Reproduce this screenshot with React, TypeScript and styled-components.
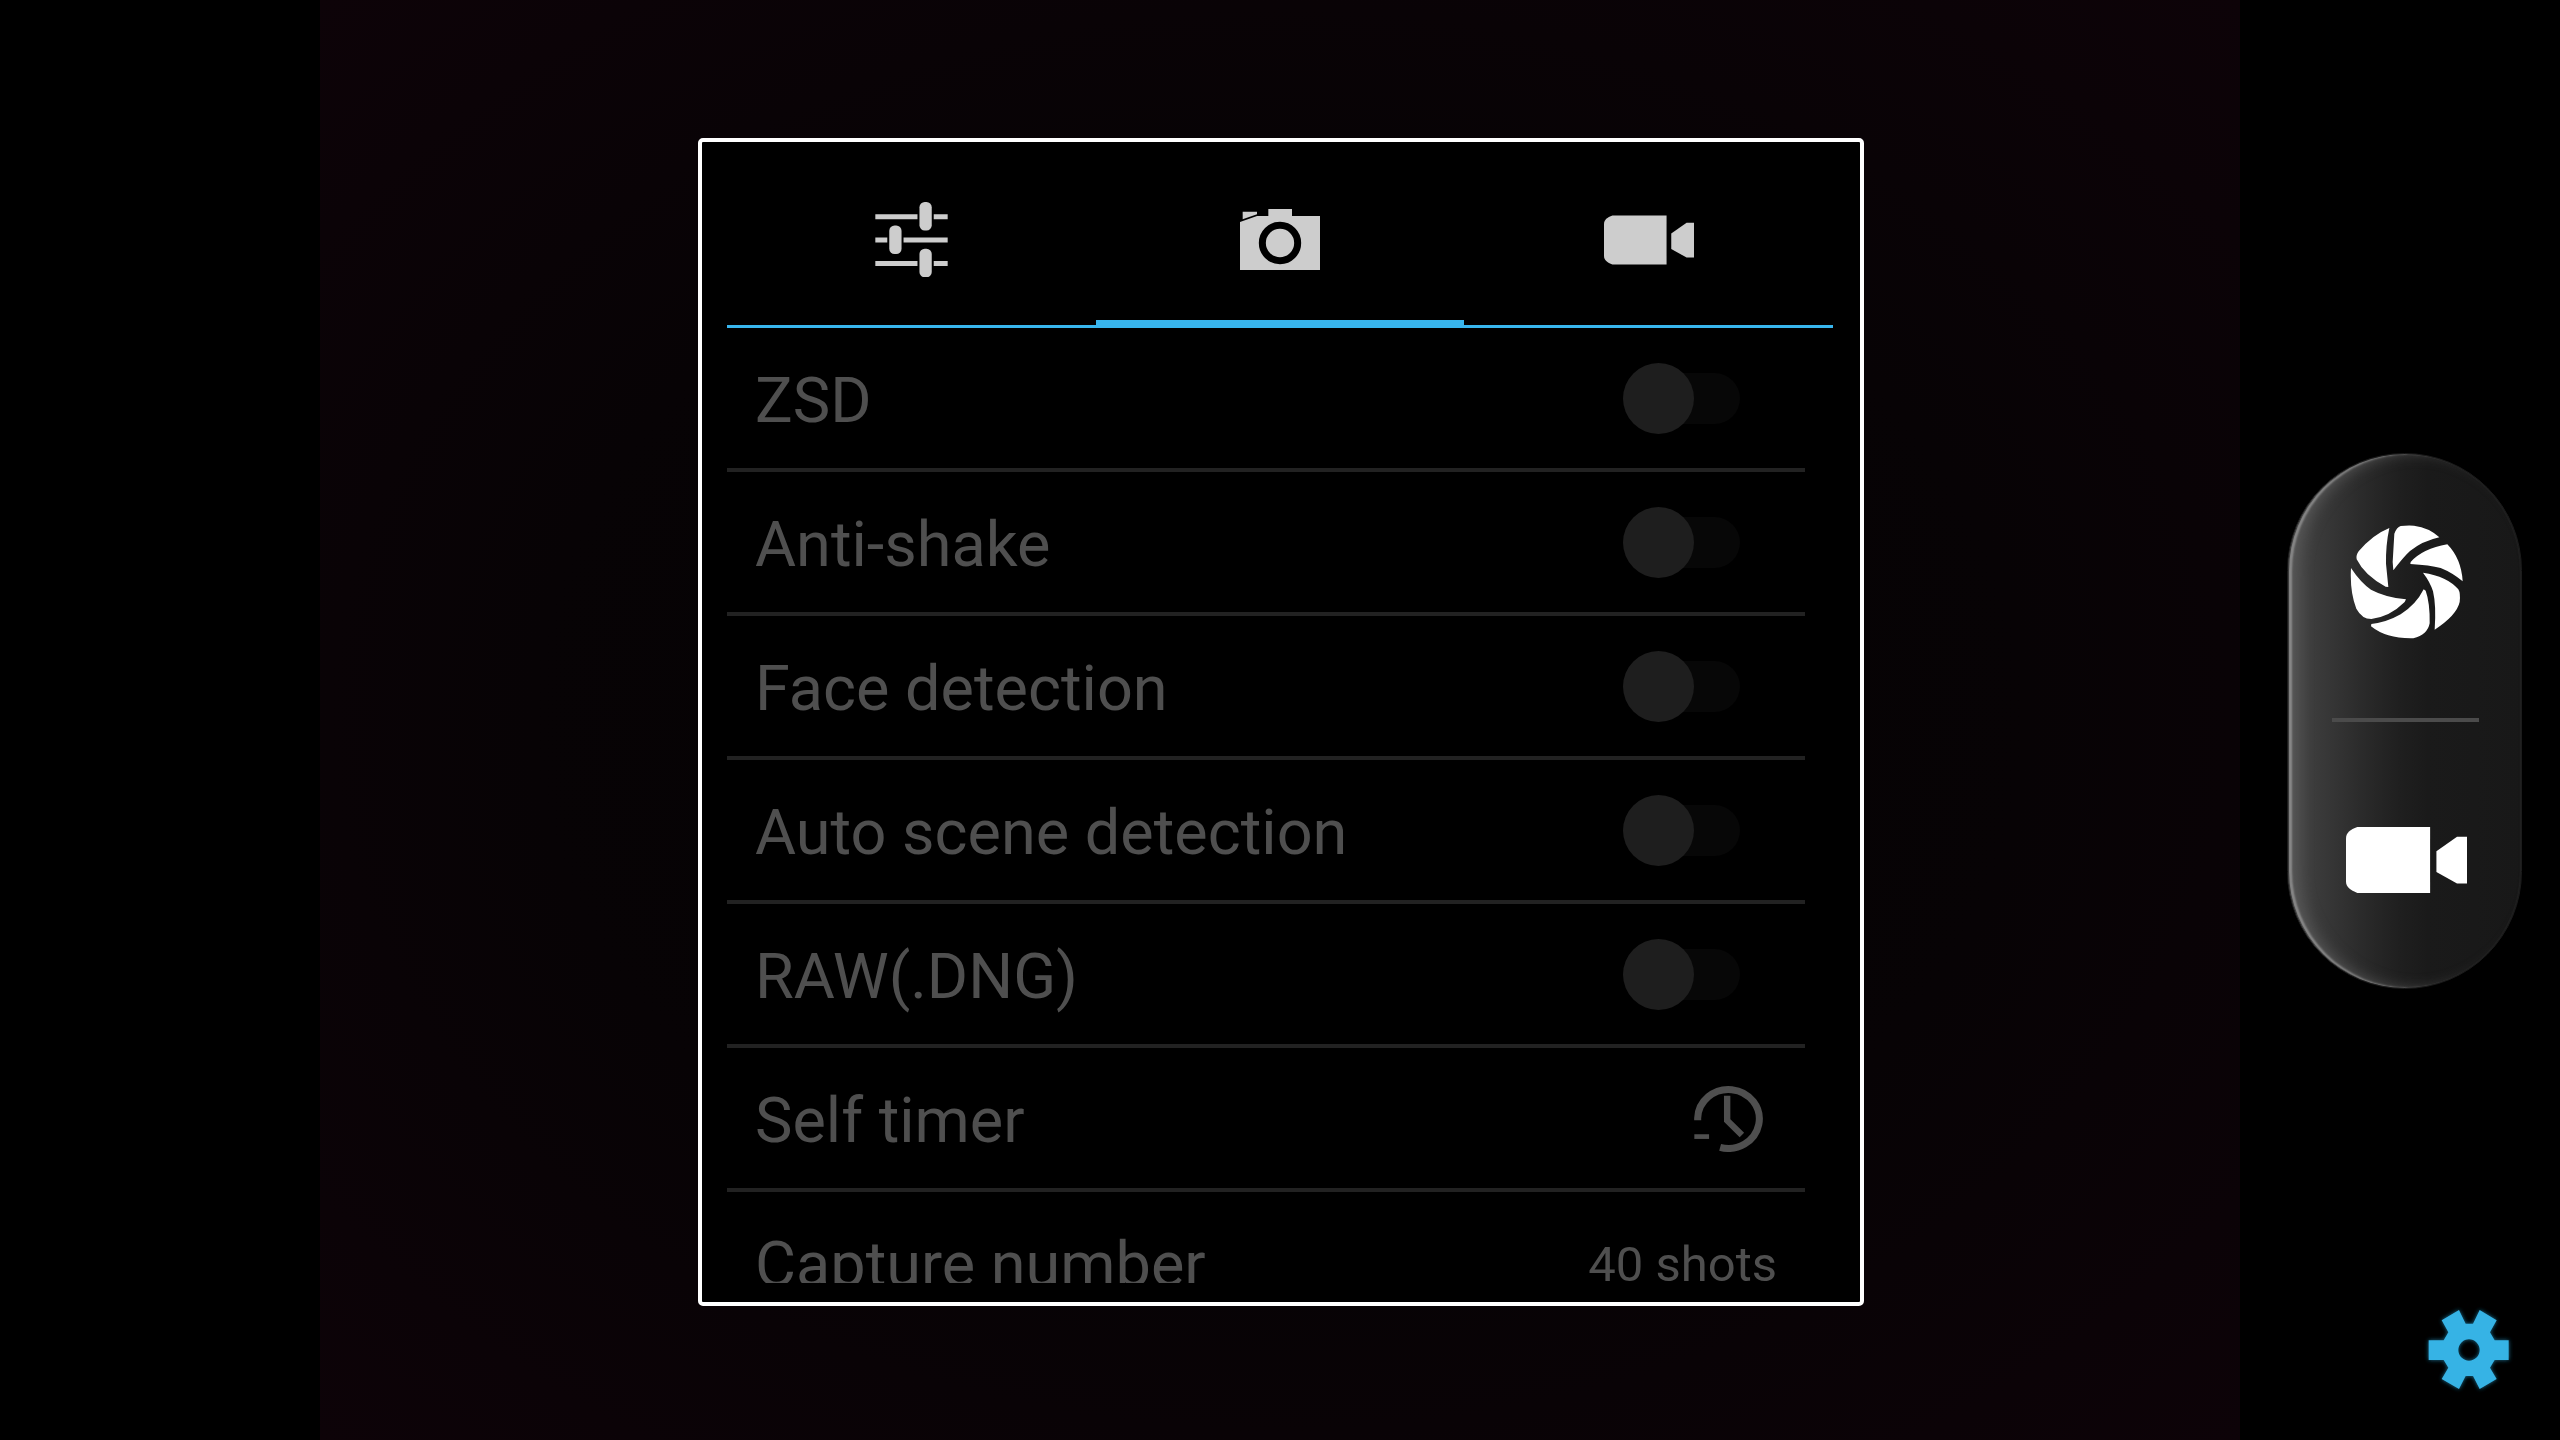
import React from 'react';
import styled, { createGlobalStyle, css } from 'styled-components';

const GlobalStyle = createGlobalStyle`
  * { box-sizing: border-box; }
  body { margin: 0; background: #000; font-family: Roboto, "Noto Sans", sans-serif; }
  button { appearance: none; border: 0; margin: 0; padding: 0; background: none; font: inherit; color: inherit; cursor: pointer; }
`;

const Screen = styled.div`
  display: grid;
  grid-template-columns: 1fr 6fr 1fr;
  height: 100vh;
  overflow: hidden;
`;

const Viewfinder = styled.main`
  grid-column: 2;
  display: flex;
  justify-content: center;
  align-items: center;
  min-height: 0;
  padding: 4px 0 0 2px;
  background: radial-gradient(ellipse at center, #040203 0%, #070305 55%, #0d0308 100%);
`;

const SettingsPanel = styled.section`
  display: flex;
  flex-direction: column;
  width: 100%;
  max-width: 1166px;
  height: calc(100vh - 272px);
  padding: 0 27px 19px 25px;
  border: 4px solid #fff;
  border-radius: 5px;
  background: #000;
`;

const TabBar = styled.div`
  display: grid;
  flex: none;
  grid-template-columns: repeat(3, 1fr);
`;

const Tab = styled.button<{ $active?: boolean }>`
  display: flex;
  justify-content: center;
  align-items: center;
  height: 186px;
  padding-top: 9px;
  color: #cdcdcd;
  box-shadow: inset 0 ${(p) => (p.$active ? '-8px' : '-3px')} #38b6ee;
`;

const SettingsList = styled.ul`
  flex: 1;
  min-height: 0;
  margin: 0;
  padding: 0 28px 0 0;
  overflow-y: auto;
  scrollbar-width: none;
  list-style: none;
`;

const Row = styled.li`
  display: flex;
  justify-content: space-between;
  align-items: center;
  height: 144px;
  padding: 0 28px;
  border-bottom: 4px solid #222;
  color: #4f4f4f;
`;

const labelText = css`
  padding-top: 6px;
  font-size: 63px;
  line-height: 76px;
  white-space: nowrap;
`;

const RowLabel = styled.label`
  ${labelText}
`;

const RowTitle = styled.span`
  ${labelText}
`;

const RowValue = styled.span`
  padding-top: 6px;
  font-size: 49px;
  line-height: 56px;
`;

const Switch = styled.input`
  display: grid;
  align-items: center;
  width: 117px;
  height: 71px;
  margin: 0 37px 0 0;
  appearance: none;

  &::before,
  &::after {
    content: '';
    grid-area: 1 / 1;
  }
  &::before {
    height: 51px;
    margin-left: 12px;
    border-radius: 26px;
    background: #070707;
  }
  &::after {
    width: 71px;
    height: 71px;
    border-radius: 50%;
    background: #1e1e1e;
  }
`;

const TimerSlot = styled.span`
  display: flex;
  margin-right: 14px;
`;

const Controls = styled.aside`
  grid-column: 3;
  display: grid;
  grid-template-rows: 1fr auto 1fr;
  padding: 2px 0 0;
`;

const CapturePill = styled.div`
  grid-row: 2;
  justify-self: center;
  display: flex;
  flex-direction: column;
  align-items: center;
  width: 235px;
  height: 536px;
  margin-left: 8px;
  padding-left: 2px;
  border: 1px solid #1b1b1b;
  border-radius: 118px;
  background: linear-gradient(90deg, #4c4c4c 0%, #3b3b3b 12%, #2c2c2c 30%, #1f1f1f 48%, #1a1a1a 60%, #181818 100%);
  box-shadow: inset 1px 0 1px #333, inset 4px 0 2px #8a8a8a, inset 12px 0 16px -4px #5a5a5a, inset -1px 0 1px #222;
`;

const CaptureButton = styled.button<{ $lower?: boolean }>`
  display: flex;
  flex: 1;
  justify-content: center;
  align-items: center;
  width: 100%;
  padding: ${(p) => (p.$lower ? '10px 0 0 2px' : '0 0 8px 2px')};
  color: #fff;
`;

const PillDivider = styled.hr`
  width: 147px;
  height: 4px;
  margin: 0;
  border: 0;
  background: #4b4b4b;
`;

const SettingsButton = styled.button`
  grid-row: 3;
  align-self: end;
  justify-self: end;
  display: flex;
  margin: 0 41px 40px 0;
`;

const SlidersIcon = () => (
  <svg width="73" height="75" viewBox="0 0 218 226" fill="currentColor" aria-hidden="true">
    <path d="M0 37h127v15H0zM176 37h42v15h-42zM0 107h36v15H0zM85 107h133v15H85zM0 178h127v15H0zM176 178h42v15h-42z" />
    <rect x="133" y="0" width="37" height="86" rx="16" />
    <rect x="42" y="71" width="37" height="86" rx="16" />
    <rect x="133" y="141" width="37" height="86" rx="16" />
  </svg>
);

const CameraIcon = () => (
  <svg width="80" height="61" viewBox="0 0 240 183" fill="currentColor" aria-hidden="true">
    <path d="M0 39 51 21H85V0h71v21h84v162H0z" />
    <path d="M8 8h43v8L8 31z" />
    <circle cx="120" cy="102" r="53" fill="none" stroke="#000" strokeWidth="21" />
  </svg>
);

const VideoIcon = ({ width, height }: { width: number; height: number }) => (
  <svg width={width} height={height} viewBox="0 0 364 198" fill="currentColor" aria-hidden="true">
    <path d="M34 0H253V198H34C13 191 0 180 0 164V34C0 18 13 7 34 0z" />
    <path d="M272 73 334 29h30v141h-30l-62-35z" />
  </svg>
);

const TimerIcon = () => (
  <svg width="69" height="67" viewBox="0 0 206 200" fill="none" stroke="currentColor" aria-hidden="true">
    <path d="M11 105V99A92 88 0 1 1 78 186" strokeWidth="21" />
    <path d="M99 32V106L143 149" strokeWidth="19" />
    <path d="M1 154H45" strokeWidth="14" />
  </svg>
);

const ShutterIcon = () => (
  <svg width="113" height="114" viewBox="240 259 339 342" fill="currentColor" aria-hidden="true">
    <path d="M370 395 368 370 373 285Q380 266 392 262 410 260 432 261 478 267 508 296 458 307 420 337 402 353 370 395z" />
    <path d="M421 376 422 370Q458 330 532 317 574 360 578 428 547 402 512 388 480 379 421 376z" />
    <path d="M459 402Q532 413 565 452 572 464 569 490 560 530 494 573 499 500 489 458 481 431 459 402z" />
    <path d="M461 452 467 456Q480 492 479 554 473 588 430 599 350 601 303 563L304 556Q350 551 392 527 438 498 461 452z" />
    <path d="M408 482 404 490Q360 534 304 541 276 541 259 510 239 460 243 388 272 432 303 453 346 476 408 482z" />
    <path d="M355 445 347 444Q284 411 260 362 257 350 266 338 308 288 358 268 347 320 348 375z" />
  </svg>
);

const GearIcon = () => (
  <svg width="100" height="100" viewBox="-150 -150 300 300" aria-hidden="true">
    <defs>
      <filter id="gear-glow" x="-20%" y="-20%" width="140%" height="140%">
        <feGaussianBlur stdDeviation="6" />
      </filter>
      <path
        id="gear-shape"
        fillRule="evenodd"
        d="M-121 -29H-76L-62 -53-82 -89-30 -120-10 -79H12L32 -120 83 -89 63 -53 77 -29H119V30H77L63 53 83 87 32 117 12 78H-10L-30 117-82 87-62 53-76 30H-121zM0 -32A32 32 0 1 0 0 32A32 32 0 1 0 0 -32z"
      />
    </defs>
    <use href="#gear-shape" fill="#1a6f93" filter="url(#gear-glow)" />
    <use href="#gear-shape" fill="#36b3e5" />
  </svg>
);

const toggles = ['ZSD', 'Anti-shake', 'Face detection', 'Auto scene detection', 'RAW(.DNG)'];

export default function App() {
  return (
    <>
      <GlobalStyle />
      <Screen>
        <Viewfinder>
          <SettingsPanel aria-label="Camera settings">
            <TabBar role="tablist">
              <Tab role="tab" aria-label="General" aria-selected={false}>
                <SlidersIcon />
              </Tab>
              <Tab role="tab" aria-label="Camera" aria-selected $active>
                <CameraIcon />
              </Tab>
              <Tab role="tab" aria-label="Video" aria-selected={false}>
                <VideoIcon width={90} height={50} />
              </Tab>
            </TabBar>
            <SettingsList>
              {toggles.map((name, i) => (
                <Row key={name}>
                  <RowLabel htmlFor={`toggle-${i}`}>{name}</RowLabel>
                  <Switch type="checkbox" role="switch" id={`toggle-${i}`} disabled />
                </Row>
              ))}
              <Row>
                <RowTitle>Self timer</RowTitle>
                <TimerSlot>
                  <TimerIcon />
                </TimerSlot>
              </Row>
              <Row>
                <RowTitle>Capture number</RowTitle>
                <RowValue>40 shots</RowValue>
              </Row>
            </SettingsList>
          </SettingsPanel>
        </Viewfinder>
        <Controls>
          <CapturePill>
            <CaptureButton aria-label="Take photo">
              <ShutterIcon />
            </CaptureButton>
            <PillDivider />
            <CaptureButton aria-label="Record video" $lower>
              <VideoIcon width={121} height={66} />
            </CaptureButton>
          </CapturePill>
          <SettingsButton aria-label="Settings">
            <GearIcon />
          </SettingsButton>
        </Controls>
      </Screen>
    </>
  );
}
